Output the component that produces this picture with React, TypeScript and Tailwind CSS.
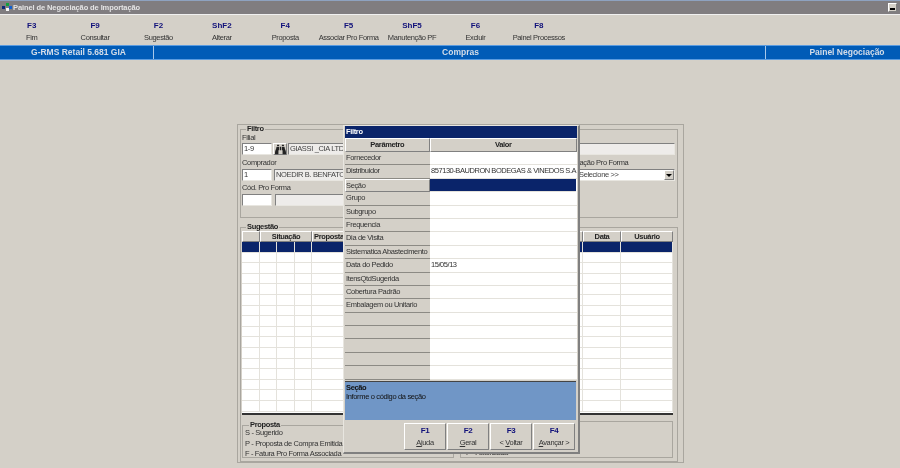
import { FaBinoculars } from 'react-icons/fa';

const toolbar = [
  ['F3', 'Fim'],
  ['F9', 'Consultar'],
  ['F2', 'Sugestão'],
  ['ShF2', 'Alterar'],
  ['F4', 'Proposta'],
  ['F5', 'Associar Pro Forma'],
  ['ShF5', 'Manutenção PF'],
  ['F6', 'Excluir'],
  ['F8', 'Painel Processos'],
];

const params: [string, string][] = [
  ['Fornecedor', ''],
  ['Distribuidor', '857130-BAUDRON BODEGAS & VINEDOS S.A'],
  ['Seção', ''],
  ['Grupo', ''],
  ['Subgrupo', ''],
  ['Frequencia', ''],
  ['Dia de Visita', ''],
  ['Sistematica Abastecimento', ''],
  ['Data do Pedido', '15/05/13'],
  ['ItensQtdSugerida', ''],
  ['Cobertura Padrão', ''],
  ['Embalagem ou Unitario', ''],
  ['', ''],
  ['', ''],
  ['', ''],
  ['', ''],
  ['', ''],
];

const tableRows = Array.from({ length: 16 }, (_, i) => i);
const raised = 'border border-t-white border-l-white border-r-[#808080] border-b-[#808080]';
const sunken = 'border border-t-[#808080] border-l-[#808080] border-r-[#e8e6e0] border-b-[#e8e6e0]';

function DialogButton({ fkey, pre, under, post }: { fkey: string; pre?: string; under: string; post: string }) {
  return (
    <div className={`w-[42px] h-[27px] flex flex-col items-center justify-center gap-[3px] bg-[#d4d0c8] ${raised}`}>
      <span className="text-[8px] leading-[9px] font-bold text-[#10107a]">{fkey}</span>
      <span className="leading-[9px] text-[#333]">
        {pre}
        <span className="underline">{under}</span>
        {post}
      </span>
    </div>
  );
}

function FilterDialog() {
  return (
    <div className="absolute left-[343px] top-[125px] w-[237px] h-[329px] flex flex-col bg-[#d4d0c8] border-r-2 border-b-2 border-[#808080] border-t border-l border-t-[#e8e6e0] border-l-[#e8e6e0]">
      <div className="h-[12px] mx-px bg-[#0a246a] text-white leading-[12px] font-bold pl-[1px]">Filtro</div>
      <div className="flex h-[14px] mx-px">
        <div className={`w-[85px] text-center leading-[12px] font-bold text-[#222] ${raised}`}>Parâmetro</div>
        <div className={`w-[148px] text-center leading-[12px] font-bold text-[#222] ${raised}`}>Valor</div>
      </div>
      <div className="mx-px h-[228px] bg-white grid grid-cols-[85px_1fr] auto-rows-[13.4px]">
        {params.map(([label, value], i) => (
          <div key={i} className="contents">
            <div className={`bg-[#d4d0c8] leading-[12px] text-[#333] whitespace-nowrap overflow-hidden ${i === 2 ? raised : 'pl-px border-b border-b-[#8c8a84]'}`}>
              {label}
            </div>
            <div className={`pl-[1px] leading-[12px] tracking-[-0.45px] text-[#333] whitespace-nowrap overflow-hidden border-b border-b-[#e4e2dc] ${i === 2 ? 'bg-[#0a246a] mr-[1px]' : ''}`}>
              {value}
            </div>
          </div>
        ))}
      </div>
      <div className="mx-px mt-[1px] mr-[2px] h-[39px] bg-[#7096c6] border-t border-t-[#444] leading-[9px] text-[#111] px-[1px] pt-[1px]">
        <div className="font-bold">Seção</div>
        <div>Informe o código da seção</div>
      </div>
      <div className="flex justify-end gap-px pr-[3px] pt-[3px]">
        <DialogButton fkey="F1" under="A" post="juda" />
        <DialogButton fkey="F2" under="G" post="eral" />
        <DialogButton fkey="F3" pre="< " under="V" post="oltar" />
        <DialogButton fkey="F4" under="A" post="vançar >" />
      </div>
    </div>
  );
}

export default function App() {
  return (
    <div className="relative w-[900px] h-[468px] overflow-hidden bg-[#d4d0c8] font-['Liberation_Sans',sans-serif] text-[7.5px] tracking-[-0.35px] blur-[0.3px]">
      {/* title bar */}
      <div className="h-[15px] flex items-center bg-[#807d80] border-t border-t-[#8ea2c0] border-b border-b-[#f0f0f0] pl-[2px]">
        <svg width="10" height="9" viewBox="0 0 10 9" className="mr-px">
          <rect x="0" y="3" width="3" height="3" fill="#0b2a7a" />
          <rect x="4" y="0" width="3" height="3" fill="#10a040" />
          <rect x="4" y="5" width="3" height="3" fill="#f5f5f5" />
          <rect x="7" y="3" width="3" height="3" fill="#1060d0" />
        </svg>
        <span className="font-bold text-[#e4e4e4] tracking-[-0.1px]">Painel de Negociação de Importação</span>
        <div className={`ml-auto mr-[3px] w-[9px] h-[9px] bg-[#d4d0c8] flex items-end justify-center pb-px ${raised}`}>
          <div className="w-[5px] h-[2px] bg-black" />
        </div>
      </div>

      {/* function keys */}
      <div className="h-[30px] flex pt-[6px]">
        {toolbar.map(([key, label]) => (
          <div key={label} className="w-[63.4px] flex flex-col items-center gap-[3px] whitespace-nowrap">
            <span className="text-[8px] leading-[9px] font-bold text-[#10107a] tracking-normal">{key}</span>
            <span className="leading-[9px] text-[#333]">{label}</span>
          </div>
        ))}
      </div>

      {/* status strip */}
      <div className="h-[15px] flex bg-[#005bb7] border-t border-b border-[#5a9be0] text-[#d4dde8] text-[8.5px] leading-[13px] font-bold tracking-normal">
        <div className="w-[154px] text-center pl-[4px] border-r border-r-[#a8c8ea]">G-RMS Retail 5.681 GIA</div>
        <div className="w-[612px] text-center pl-[2px] border-r border-r-[#a8c8ea]">Compras</div>
        <div className="flex-1 text-center pl-[28px]">Painel Negociação</div>
      </div>

      {/* main form */}
      <div className="ml-[237px] mt-[64px] w-[447px] h-[339px] border border-[#a9a69f] pl-[2px] flex flex-col">
        <fieldset className="w-[438px] h-[93px] border border-[#a9a69f] pl-[1px] pr-[2px]">
          <legend className="ml-[4px] px-[1px] leading-[8px] font-bold text-[#222]">Filtro</legend>
          <div className="leading-[9px] text-[#333]">Filial</div>
          <div className="flex gap-[1px] h-[12px] mt-[1px]">
            <div className={`w-[30px] bg-white leading-[10px] text-[#333] pl-px ${sunken}`}>1-9</div>
            <div className={`w-[14px] flex items-center justify-center ${raised}`}>
              <FaBinoculars className="w-[11px] h-[11px] text-[#222]" />
            </div>
            <div className={`flex-1 bg-[#eeecea] leading-[10px] text-[#444] pl-px ${sunken}`}>GIASSI _CIA LTDA</div>
          </div>
          <div className="flex mt-[3px]">
            <div>
              <div className="leading-[9px] text-[#333]">Comprador</div>
              <div className="flex gap-[2px] h-[12px] mt-[2px]">
                <div className={`w-[30px] bg-white leading-[10px] text-[#333] pl-px ${sunken}`}>1</div>
                <div className={`w-[90px] bg-[#eeecea] leading-[10px] text-[#444] pl-px ${sunken}`}>NOEDIR B. BENFATO</div>
              </div>
            </div>
            <div className="ml-auto w-[109px]">
              <div className="leading-[9px] text-[#333] pl-[2px]">Situação Pro Forma</div>
              <div className={`h-[12px] mt-[2px] bg-white flex justify-between leading-[10px] text-[#444] pl-[12px] ${sunken}`}>
                Selecione &gt;&gt;
                <div className={`w-[10px] bg-[#d4d0c8] flex items-center justify-center ${raised}`}>
                  <div className="w-0 h-0 border-x-[3px] border-x-transparent border-t-[3px] border-t-black" />
                </div>
              </div>
            </div>
          </div>
          <div className="leading-[9px] text-[#333] mt-[2px]">Cód. Pro Forma</div>
          <div className="flex gap-[3px] h-[12px] mt-[2px]">
            <div className={`w-[30px] bg-white ${sunken}`} />
            <div className={`w-[90px] bg-[#eeecea] ${sunken}`} />
          </div>
        </fieldset>

        <fieldset className="w-[438px] mt-[5px] flex-1 min-h-0 border border-[#a9a69f] px-[1px] flex flex-col">
          <legend className="ml-[4px] px-[1px] leading-[8px] font-bold text-[#222]">Sugestão</legend>
          <div className="w-[431px] h-[184px] bg-white border-b-2 border-b-[#333] overflow-hidden">
            <div className="flex h-[11px] bg-[#d4d0c8] leading-[9px] font-bold text-[#222] text-center">
              <div className={`w-[18px] ${raised}`} />
              <div className={`w-[52px] ${raised}`}>Situação</div>
              <div className={`w-[271px] text-left pl-px ${raised}`}>Proposta</div>
              <div className={`w-[38px] ${raised}`}>Data</div>
              <div className={`w-[52px] ${raised}`}>Usuário</div>
            </div>
            {tableRows.map((row) => (
              <div key={row} className={`grid grid-cols-[18px_17px_18px_17px_271px_38px_52px] h-[10.6px] border-b border-b-[#e4e2dc] ${row === 0 ? 'bg-[#0a246a]' : ''}`}>
                {[0, 1, 2, 3, 4, 5, 6].map((c) => (
                  <div key={c} className="border-r border-r-[#e4e2dc]" />
                ))}
              </div>
            ))}
          </div>
          <div className="flex gap-[6px] mt-[6px]">
            <fieldset className="w-[212px] h-[37px] border border-[#a9a69f] pl-[2px]">
              <legend className="ml-[4px] px-[1px] leading-[8px] font-bold text-[#222]">Proposta</legend>
              <div className="-mt-[1px] leading-[10.5px] text-[#333] whitespace-nowrap">S - Sugerido</div>
              <div className="leading-[10.5px] text-[#333] whitespace-nowrap">P - Proposta de Compra Emitida</div>
              <div className="leading-[10.5px] text-[#333] whitespace-nowrap">F - Fatura Pro Forma Associada</div>
            </fieldset>
            <div className="w-[213px] h-[37px] border border-[#a9a69f] pl-[5px] pt-[26px] leading-[9px] text-[#333]">
              F - Autorizada
            </div>
          </div>
        </fieldset>
      </div>

      <FilterDialog />
    </div>
  );
}
